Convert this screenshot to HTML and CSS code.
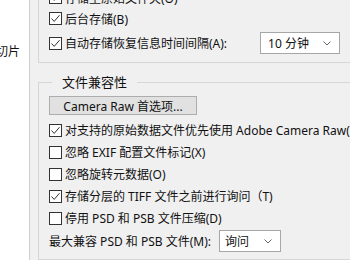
FILE: index.html
```html
<!DOCTYPE html>
<html>
  <head>
    <title>首选项 - 文件处理</title>
    <link rel="stylesheet" href="styles.css">
  </head>
  <body>
    <div class="window">
      <div class="side">
        <span class="side-label">切片</span>
      </div>

      <div class="panel">
        <div class="group group-top">
          <label class="row"><span class="box checked"><svg viewBox="0 0 13 13"><path d="M2.5 6.5 L5.2 9.4 L10.5 3.2"/></svg></span>存储至原始文件夹(O)</label>
          <label class="row"><span class="box checked"><svg viewBox="0 0 13 13"><path d="M2.5 6.5 L5.2 9.4 L10.5 3.2"/></svg></span>后台存储(B)</label>
          <div class="row row-select">
            <label class="row-label"><span class="box checked"><svg viewBox="0 0 13 13"><path d="M2.5 6.5 L5.2 9.4 L10.5 3.2"/></svg></span>自动存储恢复信息时间间隔(A):</label>
            <div class="select select-time">
              <span>10 分钟</span>
              <svg class="chevron" viewBox="0 0 8 5"><path d="M0.5 0.5 L4 4 L7.5 0.5"/></svg>
            </div>
          </div>
        </div>

        <fieldset class="group">
          <legend>文件兼容性</legend>
          <button class="button">Camera Raw 首选项...</button>
          <label class="row"><span class="box checked"><svg viewBox="0 0 13 13"><path d="M2.5 6.5 L5.2 9.4 L10.5 3.2"/></svg></span>对支持的原始数据文件优先使用 Adobe Camera Raw(C)</label>
          <label class="row"><span class="box"></span>忽略 EXIF 配置文件标记(X)</label>
          <label class="row"><span class="box"></span>忽略旋转元数据(O)</label>
          <label class="row"><span class="box checked"><svg viewBox="0 0 13 13"><path d="M2.5 6.5 L5.2 9.4 L10.5 3.2"/></svg></span>存储分层的 TIFF 文件之前进行询问（T)</label>
          <label class="row"><span class="box"></span>停用 PSD 和 PSB 文件压缩(D)</label>
          <div class="row row-last">
            <span>最大兼容 PSD 和 PSB 文件(M):</span>
            <div class="select select-ask">
              <span>询问</span>
              <svg class="chevron" viewBox="0 0 8 5"><path d="M0.5 0.5 L4 4 L7.5 0.5"/></svg>
            </div>
          </div>
        </fieldset>
      </div>
    </div>
  </body>
</html>
```

FILE: styles.css
```css
html, body {
  margin: 0;
  overflow: hidden;
}

body {
  font-family: "Noto Sans", "Noto Sans CJK SC", sans-serif;
  font-size: 12px;
  color: #111;
  background-color: #fff;
}

.window {
  display: flex;
  width: 440px;
  height: 260px;
}

.side {
  width: 29px;
  flex: none;
  display: flex;
  justify-content: flex-end;
  align-items: flex-start;
  background-color: #fff;
  padding-top: 44px;
  box-sizing: border-box;
  padding-right: 9px;
  white-space: nowrap;
}

.side-label {
  flex: none;
  line-height: 16px;
}

.panel {
  flex: 1;
  background-color: #f0f0f0;
  border-left: 1px solid #cfcfcf;
  padding-left: 8px;
}

.group {
  border: 1px solid #d6d6d6;
  width: 380px;
  box-sizing: border-box;
  margin: 0;
  padding: 0 10px;
}

.group-top {
  margin-top: -14px;
  padding-bottom: 8px;
}

.row {
  display: flex;
  align-items: center;
  height: 22px;
  white-space: nowrap;
}

.group-top .row {
  height: 21px;
}

.group-top .row-select {
  height: 22px;
  margin-top: 3px;
}

.row-label {
  display: flex;
  align-items: center;
}

.box {
  width: 13px;
  height: 13px;
  box-sizing: border-box;
  border: 1px solid #333;
  background-color: #fff;
  margin-right: 3px;
  flex: none;
  position: relative;
}

.box svg {
  position: absolute;
  left: -1px;
  top: -1px;
  width: 13px;
  height: 13px;
  fill: none;
  stroke: #333;
  stroke-width: 1;
}

fieldset.group {
  margin-top: 11px;
  padding-bottom: 6px;
}

legend {
  margin-left: 3px;
  padding: 0 10px;
  line-height: 16px;
  font-size: 13px;
}

.button {
  display: block;
  width: 148px;
  height: 19px;
  margin: 6px 0 4px 0;
  padding: 0;
  font-family: inherit;
  font-size: 12px;
  color: #111;
  background-color: #e1e1e1;
  border: 1px solid #adadad;
}

.select {
  display: flex;
  align-items: center;
  justify-content: space-between;
  height: 22px;
  box-sizing: border-box;
  background-color: #fff;
  border: 1px solid #a7a7a7;
  padding: 0 8px 0 7px;
}

.select-time {
  width: 80px;
  margin-left: 33px;
}

.select-ask {
  width: 62px;
  margin-left: 8px;
  padding-left: 5px;
}

.row-last {
  height: 24px;
}

.chevron {
  width: 8px;
  height: 5px;
  fill: none;
  stroke: #666;
  stroke-width: 1;
}
```
